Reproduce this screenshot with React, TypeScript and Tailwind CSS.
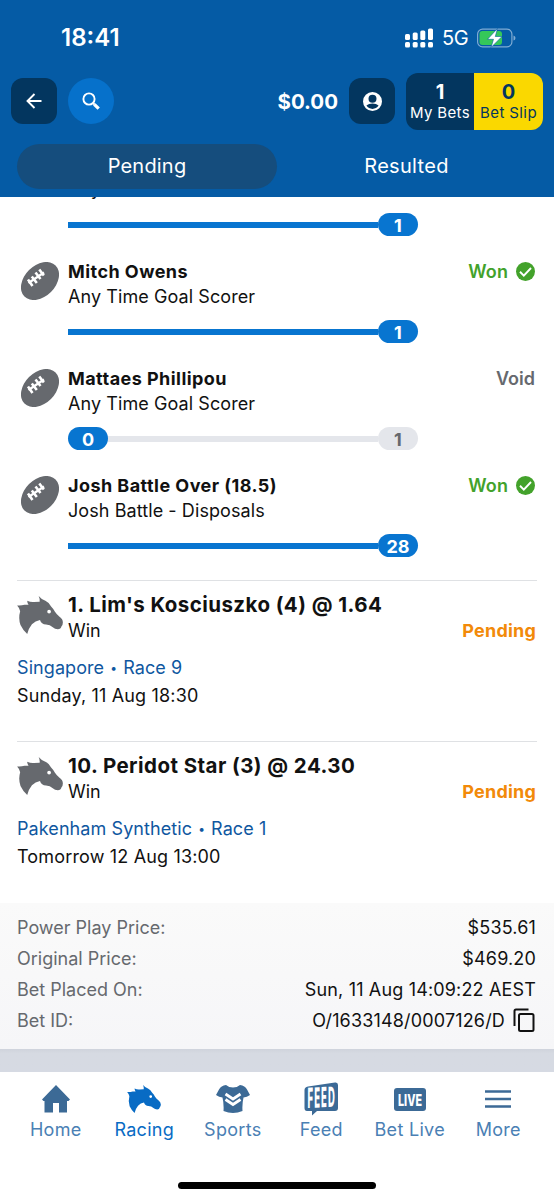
import type { ReactNode } from "react";

type Leg = {
  name: string;
  market: string;
  result: "Won" | "Void";
  value: number;
  target?: number;
};

const legs: Leg[] = [
  { name: "Mitch Owens", market: "Any Time Goal Scorer", result: "Won", value: 1 },
  { name: "Mattaes Phillipou", market: "Any Time Goal Scorer", result: "Void", value: 0, target: 1 },
  { name: "Josh Battle Over (18.5)", market: "Josh Battle - Disposals", result: "Won", value: 28 },
];

const races = [
  {
    runner: "1. Lim's Kosciuszko (4) @ 1.64",
    venue: "Singapore",
    race: "Race 9",
    time: "Sunday, 11 Aug 18:30",
  },
  {
    runner: "10. Peridot Star (3) @ 24.30",
    venue: "Pakenham Synthetic",
    race: "Race 1",
    time: "Tomorrow 12 Aug 13:00",
  },
];

function HorseIcon({ className }: { className: string }) {
  return (
    <svg viewBox="0 0 136 113" fill="currentColor" className={className}>
      <path
        fillRule="evenodd"
        d="M0 28Q12 29 22 26L34 26Q30 21 30 14Q40 19 50 18L67 17Q68 8 64 0Q72 10 84 14Q95 19 101 31Q108 38 112 46Q117 54 126 62Q136 69 136 79Q136 86 132 90Q130 99 121 99Q112 99 106 93Q98 86 86 85Q72 84 68 71Q54 73 44 84Q34 96 30 113Q17 101 10 86Q3 66 9 45Q7 35 0 28ZM95 41a5.500 5.500 0 1 0 0.1 11a5.500 5.500 0 1 0 -0.1 -11Z"
      />
    </svg>
  );
}

function BallIcon() {
  return (
    <svg viewBox="0 0 38 38" className="h-[38px] w-[38px]">
      <ellipse cx="19" cy="19" rx="22" ry="15.500" transform="rotate(-45 19 19)" fill="#66696e" />
      <g stroke="#fff" fill="none">
        <path strokeWidth="2.200" d="M7.500 21L23 10.500" />
        <path strokeWidth="2.600" d="M7 17.500l4.500 6.500M10.800 14.500l5 6.500M14.500 10.500l5 6.500M18.300 7.500l4.500 6" />
      </g>
    </svg>
  );
}

function WonIcon() {
  return (
    <svg viewBox="0 0 20 20" className="h-[19px] w-[19px]">
      <circle cx="10" cy="10" r="10" fill="#43a22b" />
      <path d="M4.200 10.300l4 4L15.800 6.300" fill="none" stroke="#fff" strokeWidth="2" />
    </svg>
  );
}

function Pill({ muted, children }: { muted?: boolean; children: ReactNode }) {
  return (
    <span
      className={`flex h-[23px] w-10 items-center justify-center rounded-full pt-px text-[18px] font-bold ${
        muted ? "bg-[#e4e6eb] text-[#66696e]" : "bg-[#0875d0] text-white"
      }`}
    >
      {children}
    </span>
  );
}

function Progress({ value, target }: { value: number; target?: number }) {
  const missed = target !== undefined;
  return (
    <div className="flex w-[350px] items-center">
      {missed && <Pill>{value}</Pill>}
      <div className={`h-1.5 flex-1 ${missed ? "bg-[#e4e6eb]" : "bg-[#0875d0]"}`} />
      <Pill muted={missed}>{missed ? target : value}</Pill>
    </div>
  );
}

function LegRow({ leg }: { leg: Leg }) {
  return (
    <div className="flex h-[107px] shrink-0">
      <div className="ml-[21px] w-[47px] pt-[3px]">
        <BallIcon />
      </div>
      <div className="flex-1">
        <div className="flex h-[25px] items-center justify-between pr-[19px]">
          <span className="text-[18px] font-bold tracking-[0.450px]">{leg.name}</span>
          {leg.result === "Won" ? (
            <span className="flex items-center gap-2 text-[18px] font-semibold tracking-[0.1px] text-[#43a22b]">
              Won
              <WonIcon />
            </span>
          ) : (
            <span className="text-[18px] font-semibold text-[#66696e]">Void</span>
          )}
        </div>
        <p className="mb-[11px] h-[25px] text-[18px] leading-[25px] tracking-[0.080px]">{leg.market}</p>
        <Progress value={leg.value} target={leg.target} />
      </div>
    </div>
  );
}

function DetailRow({ label, children }: { label: string; children: ReactNode }) {
  return (
    <div className="flex h-[31px] items-center justify-between">
      <span className="text-[#66696e]">{label}</span>
      <span className="tracking-[0.160px]">{children}</span>
    </div>
  );
}

function NavItem({ label, active, children }: { label: string; active?: boolean; children: ReactNode }) {
  return (
    <div className={`flex w-[88.500px] flex-col items-center ${active ? "text-[#086bc4]" : "text-[#3c6a96]"}`}>
      <div className="flex h-[38px] items-center justify-center">{children}</div>
      <span
        className={`mt-px text-[18px] leading-[22px] tracking-[0.3px] ${active ? "text-[#086bc4]" : "text-[#4a80b4]"}`}
      >
        {label}
      </span>
    </div>
  );
}

function App() {
  return (
    <div className="flex h-[1200px] w-[554px] flex-col overflow-hidden bg-white font-['Inter',sans-serif] text-[#111]">
      <header className="h-[197px] shrink-0 bg-[#055ba5] text-white">
        <div className="flex h-[72px] items-center justify-between pt-[3px] pr-[38px] pl-[61px]">
          <span className="text-[24px] font-semibold">18:41</span>
          <div className="flex items-center">
            <svg viewBox="0 0 28 20" fill="#fff" className="h-5 w-7">
              <rect x="0" y="6" width="5" height="6" rx="1.500" />
              <rect x="7.700" y="4.500" width="5" height="7.500" rx="1.500" />
              <rect x="15.300" y="2.500" width="5" height="9.500" rx="1.500" />
              <rect x="23" y="0.500" width="5" height="11.500" rx="1.500" />
              <rect x="0" y="14" width="5" height="5.500" rx="1.500" />
              <rect x="7.700" y="14" width="5" height="5.500" rx="1.500" />
              <rect x="15.300" y="14" width="5" height="5.500" rx="1.500" />
              <rect x="23" y="14" width="5" height="5.500" rx="1.500" />
            </svg>
            <span className="ml-[9px] w-[26px] text-[20px] tracking-[-0.3px]">5G</span>
            <svg viewBox="0 0 39 20" className="ml-[9px] h-5 w-[39px]">
              <rect x="0.600" y="1.100" width="34.300" height="17.800" rx="5" fill="none" stroke="#7fabd3" strokeWidth="1.200" />
              <path d="M36.500 7.500q2 0.500 2 2.500t-2 2.500Z" fill="#7fabd3" />
              <rect x="2.500" y="3" width="22.500" height="14" rx="3" fill="#35c759" />
              <path
                d="M20.500 0.500L10.500 11.300H16.500L14 19.500L25 8.500H18.300Z"
                fill="#fff"
                stroke="#055ba5"
                strokeWidth="0.600"
              />
            </svg>
          </div>
        </div>

        <div className="flex h-[58px] items-center px-[11px]">
          <div className="flex h-[46px] w-[46px] items-center justify-center rounded-xl bg-[#03365f]">
            <svg viewBox="0 0 16 16" className="h-4 w-4" fill="none" stroke="#fff" strokeWidth="1.900">
              <path d="M15.500 8H2M8.500 1L1.500 8L8.500 15" />
            </svg>
          </div>
          <div className="ml-[11px] flex h-[46px] w-[46px] items-center justify-center rounded-full bg-[#0671cb]">
            <svg viewBox="0 0 18 18" className="h-[18px] w-[18px]" fill="none" stroke="#fff">
              <circle cx="7" cy="7" r="5.600" strokeWidth="1.900" />
              <path d="M11 11L12.500 12.500" strokeWidth="2" />
              <path d="M12.300 12.300L16.700 16.700" strokeWidth="3.300" />
            </svg>
          </div>
          <span className="ml-auto pt-0.5 text-[20.500px] font-bold">$0.00</span>
          <div className="ml-[11px] flex h-[46px] w-[46px] items-center justify-center rounded-xl bg-[#03365f]">
            <svg viewBox="0 0 20 20" className="h-[19px] w-[19px]">
              <path
                fill="#fff"
                fillRule="evenodd"
                d="M10 0a10 10 0 1 0 0 20a10 10 0 1 0 0-20ZM10 3a4.200 4.200 0 1 1 0 8.400a4.200 4.200 0 1 1 0-8.400ZM3.600 14.300Q6 12 10 12T16.400 14.300Q14 17.800 10 17.800T3.600 14.300Z"
              />
            </svg>
          </div>
          <div className="ml-[11px] flex h-[57px] overflow-hidden rounded-xl">
            <div className="flex w-[68px] flex-col items-center bg-[#03365f] pt-[7px]">
              <span className="text-[20px] leading-6 font-bold">1</span>
              <span className="-mt-px text-[15px] leading-[19px] tracking-[0.35px]">My Bets</span>
            </div>
            <div className="flex w-[69px] flex-col items-center bg-[#fad800] pt-[7px] text-[#03365f]">
              <span className="text-[20px] leading-6 font-bold">0</span>
              <span className="-mt-px text-[15px] leading-[19px] tracking-[0.4px]">Bet Slip</span>
            </div>
          </div>
        </div>

        <div className="mt-[14px] flex px-[17px] text-[20px] tracking-[0.2px]">
          <div className="flex h-[45px] w-[260px] items-center justify-center rounded-full bg-[#154d7d] pb-0.5">
            Pending
          </div>
          <div className="flex h-[45px] w-[259px] items-center justify-center pb-0.5 tracking-[0.3px]">Resulted</div>
        </div>
      </header>

      <main className="flex h-[706px] shrink-0 flex-col overflow-hidden">
        {/* tail of the leg that is scrolled under the header */}
        <div className="ml-[68px] h-[62px] shrink-0">
          <p className="-mt-[21px] mb-3 h-[25px] text-[18px] leading-[25px]">Any Time Goal Scorer</p>
          <Progress value={1} />
        </div>
        {legs.map((leg) => (
          <LegRow key={leg.name} leg={leg} />
        ))}
        {races.map((race) => (
          <div key={race.venue} className="mx-[17px] h-[161.400px] shrink-0 border-t border-[#dfe1e4] pt-[11px]">
            <div className="flex">
              <HorseIcon className="mt-1 h-[38px] w-[46px] text-[#66696e]" />
              <div className="ml-[5px] flex-1">
                <p className="mb-px text-[20.500px] leading-[25px] font-bold tracking-[0.440px]">{race.runner}</p>
                <div className="flex h-[25px] items-center justify-between pr-px text-[18px]">
                  <span>Win</span>
                  <span className="font-bold tracking-[0.200px] text-[#f28a09]">Pending</span>
                </div>
              </div>
            </div>
            <p className="mt-[11px] flex items-center text-[18px] leading-7 tracking-[0.080px] text-[#0f57a0]">
              {race.venue}
              <span className="w-[19px] text-center text-[12px]">•</span>
              {race.race}
            </p>
            <p className="text-[18px] leading-7 tracking-[0.160px]">{race.time}</p>
          </div>
        ))}
      </main>

      <section className="h-[146px] shrink-0 bg-linear-to-b from-[#fafafa] to-[#f6f6f8] pt-[9px] pr-[18px] pl-[17px] text-[18px]">
        <DetailRow label="Power Play Price:">$535.61</DetailRow>
        <DetailRow label="Original Price:">$469.20</DetailRow>
        <DetailRow label="Bet Placed On:">Sun, 11 Aug 14:09:22 AEST</DetailRow>
        <DetailRow label="Bet ID:">
          <span className="flex items-center gap-2 pr-px">
            O/1633148/0007126/D
            <svg viewBox="0 0 22 24" className="-mt-0.5 h-6 w-[22px]" fill="none" stroke="#111" strokeWidth="2">
              <path d="M1.500 18V3Q1.500 1.500 3 1.500H15.500" />
              <rect x="6" y="6" width="14.500" height="17" rx="1.500" />
            </svg>
          </span>
        </DetailRow>
      </section>
      <div className="h-[23px] shrink-0 bg-linear-to-b from-[#cfd3dc] via-[#d6dae2] via-20% to-[#d6dae3]" />

      <nav className="flex h-[128px] shrink-0 flex-col items-center justify-between bg-white pt-2">
        <div className="flex w-[531px]">
          <NavItem label="Home">
            <svg viewBox="0 0 28 28" className="h-7 w-7" fill="currentColor">
              <path d="M14 0L28 14.500L26.500 16H25V27.500H17V18H11V27.500H2.500V16H1.500L0 14.500Z" />
            </svg>
          </NavItem>
          <NavItem label="Racing" active>
            <HorseIcon className="h-7 w-[34px]" />
          </NavItem>
          <NavItem label="Sports">
            <svg viewBox="0 0 34 28" className="h-7 w-[34px]" fill="currentColor">
              <path d="M10 0Q13 2.500 17 2.500T24 0Q29 0.500 31 4.500L34 10Q31 12 27.500 12.500Q26 19 26.500 26Q17 30 7.500 26Q8 19 6.500 12.500Q3 12 0 10L3 4.500Q5 0.500 10 0Z" />
              <path d="M9.500 9L17 14L24.500 9M9.500 14.500L17 19.500L24.500 14.500" fill="none" stroke="#fff" strokeWidth="2.800" />
            </svg>
          </NavItem>
          <NavItem label="Feed">
            <svg viewBox="0 0 34 34" className="h-[34px] w-[34px]">
              <path
                fill="currentColor"
                d="M4 4.500L31 0.500Q34 0 34 3V26Q34 29 31 29H13L8 33.500L8 29H3Q0.500 29 0.500 26V8Q0.500 5 4 4.500Z"
              />
              <g transform="translate(3.500 26) skewY(-3)">
                <text
                  transform="scale(0.700 2.050)"
                  textLength="39"
                  fill="#fff"
                  className="font-['Inter',sans-serif] text-[13.500px] font-extrabold"
                >
                  FEED
                </text>
              </g>
            </svg>
          </NavItem>
          <NavItem label="Bet Live">
            <svg viewBox="0 0 32 23" className="h-[23px] w-8">
              <rect width="32" height="23" rx="3" fill="currentColor" />
              <text
                x="4"
                y="17.500"
                textLength="24"
                lengthAdjust="spacingAndGlyphs"
                fill="#fff"
                className="font-['Inter',sans-serif] text-[16.500px] font-extrabold"
              >
                LIVE
              </text>
            </svg>
          </NavItem>
          <NavItem label="More">
            <svg viewBox="0 0 26 18" className="h-[18px] w-[26px]" stroke="currentColor" strokeWidth="2.600">
              <path d="M0 1.500H26M0 9H26M0 16.500H26" />
            </svg>
          </NavItem>
        </div>
        <div className="mb-[11px] h-[7px] w-[198px] rounded-full bg-black" />
      </nav>
    </div>
  );
}

export default App;
